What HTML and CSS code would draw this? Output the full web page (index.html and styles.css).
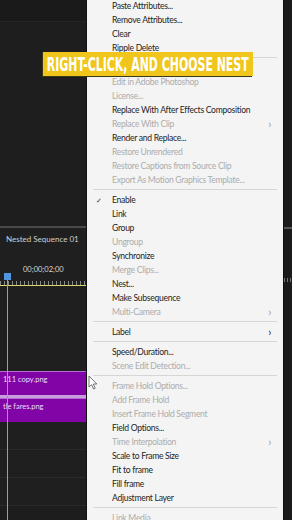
FILE: index.html
```html
<!DOCTYPE html>
<html lang="en">
	<head>
		<meta charset="UTF-8" />
		<meta name="viewport" content="width=device-width, initial-scale=1.0" />
		<title>Nest</title>
		<link rel="stylesheet" href="styles.css">
	</head>
	<body>
		<div class="stage">
			<div class="left">
				<div class="top-bar"></div>
				<div class="monitor"></div>
				<div class="timeline">
					<div class="seq-name">Nested Sequence 01</div>
					<div class="timecode">00;00;02;00</div>
					<div class="ruler"></div>
					<div class="track-empty"></div>
					<div class="clip">111 copy.png</div>
					<div class="clip-gap"></div>
					<div class="clip">tle fares.png</div>
					<div class="track-line"></div>
					<div class="track-line"></div>
					<div class="track-line"></div>
				</div>
				<div class="playhead-head"></div>
				<div class="playhead"></div>
			</div>

			<ul class="menu">
				<li>Paste Attributes...</li>
				<li>Remove Attributes...</li>
				<li>Clear</li>
				<li>Ripple Delete</li>
				<li class="sep"></li>
				<li class="off">Edit Original</li>
				<li class="off">Edit in Adobe Photoshop</li>
				<li class="off">License...</li>
				<li>Replace With After Effects Composition</li>
				<li class="off sub">Replace With Clip</li>
				<li>Render and Replace...</li>
				<li class="off">Restore Unrendered</li>
				<li class="off">Restore Captions from Source Clip</li>
				<li class="off">Export As Motion Graphics Template...</li>
				<li class="sep"></li>
				<li class="checked">Enable</li>
				<li>Link</li>
				<li>Group</li>
				<li class="off">Ungroup</li>
				<li>Synchronize</li>
				<li class="off">Merge Clips...</li>
				<li>Nest...</li>
				<li>Make Subsequence</li>
				<li class="off sub">Multi-Camera</li>
				<li class="sep"></li>
				<li class="sub">Label</li>
				<li class="sep"></li>
				<li>Speed/Duration...</li>
				<li class="off">Scene Edit Detection...</li>
				<li class="sep"></li>
				<li class="off">Frame Hold Options...</li>
				<li class="off">Add Frame Hold</li>
				<li class="off">Insert Frame Hold Segment</li>
				<li>Field Options...</li>
				<li class="off sub">Time Interpolation</li>
				<li>Scale to Frame Size</li>
				<li>Fit to frame</li>
				<li>Fill frame</li>
				<li>Adjustment Layer</li>
				<li class="sep"></li>
				<li class="off">Link Media</li>
			</ul>

			<div class="right">
				<div class="right-top"></div>
				<div class="right-ticks"></div>
			</div>

			<div class="banner"><span>RIGHT-CLICK, AND CHOOSE NEST</span></div>

			<svg class="cursor" width="10" height="15" viewBox="0 0 10 15">
				<path d="M1 1 L1 12 L3.6 9.6 L5.6 14 L7.2 13.3 L5.3 9 L8.8 9 Z" fill="#fff" stroke="#555" stroke-width="0.8" />
			</svg>
		</div>
	</body>
</html>
```

FILE: styles.css
```css
body {
	margin: 0;
	background: #1b1b1b;
	font-family: 'Lato', 'Open Sans', sans-serif;
}
.stage {
	position: relative;
	display: flex;
	width: 292px;
	height: 520px;
	overflow: hidden;
}

/* left side: monitor and timeline */
.left {
	position: relative;
	width: 87px;
	flex: none;
	background: #1d1d1d;
	border-right: 1px solid #111;
	box-sizing: border-box;
}
.top-bar {
	height: 21px;
	background: #1a1a1a;
	border-bottom: 1px solid #262626;
}
.monitor {
	height: 204px;
	background: #1e1e1e;
	border-bottom: 2px solid #4a4a4a;
}
.timeline {
	display: flex;
	flex-direction: column;
	background: #1f1f1f;
}
.seq-name {
	height: 24px;
	padding: 6px 0 0 6px;
	box-sizing: border-box;
	font-size: 8px;
	color: #cfcfcf;
	white-space: nowrap;
}
.timecode {
	height: 15px;
	padding: 13px 0 0 23px;
	font-size: 7.5px;
	color: #d6d6d6;
	line-height: 10px;
}
.ruler {
	height: 6px;
	margin-top: -1px;
	background: repeating-linear-gradient(90deg, #888 0 1px, transparent 1px 4px) 0 2px / 100% 4px no-repeat;
	border-bottom: 1px solid #d9d66a;
}
.track-empty {
	height: 85px;
}
.clip {
	height: 24px;
	padding: 3px 0 0 3px;
	box-sizing: border-box;
	background: #8004a6;
	border-top: 1px solid #b06fd0;
	font-size: 7.5px;
	color: #f1dcf7;
	white-space: nowrap;
}
.clip-gap {
	height: 3px;
	background: #c89fdc;
}
.track-line {
	height: 27px;
	border-bottom: 1px solid #2b2b2b;
}
.playhead-head {
	position: absolute;
	left: 4px;
	top: 273px;
	width: 7px;
	height: 7px;
	background: #4f95e0;
}
.playhead {
	position: absolute;
	left: 7px;
	top: 280px;
	width: 1px;
	height: 240px;
	background: #7aa3d8;
}

/* context menu */
.menu {
	width: 196px;
	flex: none;
	margin: -1px 0 0;
	padding: 0;
	list-style: none;
	background: #f4f4f4;
}
.menu li {
	position: relative;
	height: 14px;
	padding-left: 25px;
	font-size: 8.6px;
	letter-spacing: -0.3px;
	line-height: 14px;
	color: #1e1e1e;
	white-space: nowrap;
}
.menu li.off {
	color: #acacac;
}
.menu li.sep {
	height: 6px;
	padding: 0;
}
.menu li.sep::before {
	content: '';
	position: absolute;
	left: 6px;
	right: 6px;
	top: 2px;
	border-top: 1px solid #d6d6d6;
}
.menu li.checked::before {
	content: '\2713';
	position: absolute;
	left: 9px;
	font-size: 7px;
	color: #333;
}
.menu li.sub::after {
	content: '\203A';
	position: absolute;
	right: 12px;
	font-size: 11px;
	color: #999;
}
.menu li.sub:not(.off)::after {
	color: #222;
}

/* right strip */
.right {
	flex: 1;
	background: #1b1b1b;
	border-left: 1px solid #0e0e0e;
}
.right-top {
	height: 227px;
	border-bottom: 2px solid #555;
}
.right-ticks {
	height: 4px;
	margin-top: 49px;
	background: repeating-linear-gradient(90deg, #777 0 1px, transparent 1px 3px);
}

/* overlays */
.banner {
	position: absolute;
	left: 43px;
	top: 52px;
	width: 210px;
	height: 24px;
	background: #f0c61c;
	box-shadow: -1px 1px 0 #3a3a1a;
	overflow: hidden;
}
.banner span {
	display: block;
	width: 330px;
	transform: scaleX(0.64);
	transform-origin: 0 0;
	padding-left: 6px;
	font-family: 'DejaVu Sans Condensed', 'DejaVu Sans', sans-serif;
	font-weight: bold;
	font-size: 19px;
	line-height: 24px;
	color: #fff;
	white-space: nowrap;
}
.cursor {
	position: absolute;
	left: 88px;
	top: 375px;
}
```
